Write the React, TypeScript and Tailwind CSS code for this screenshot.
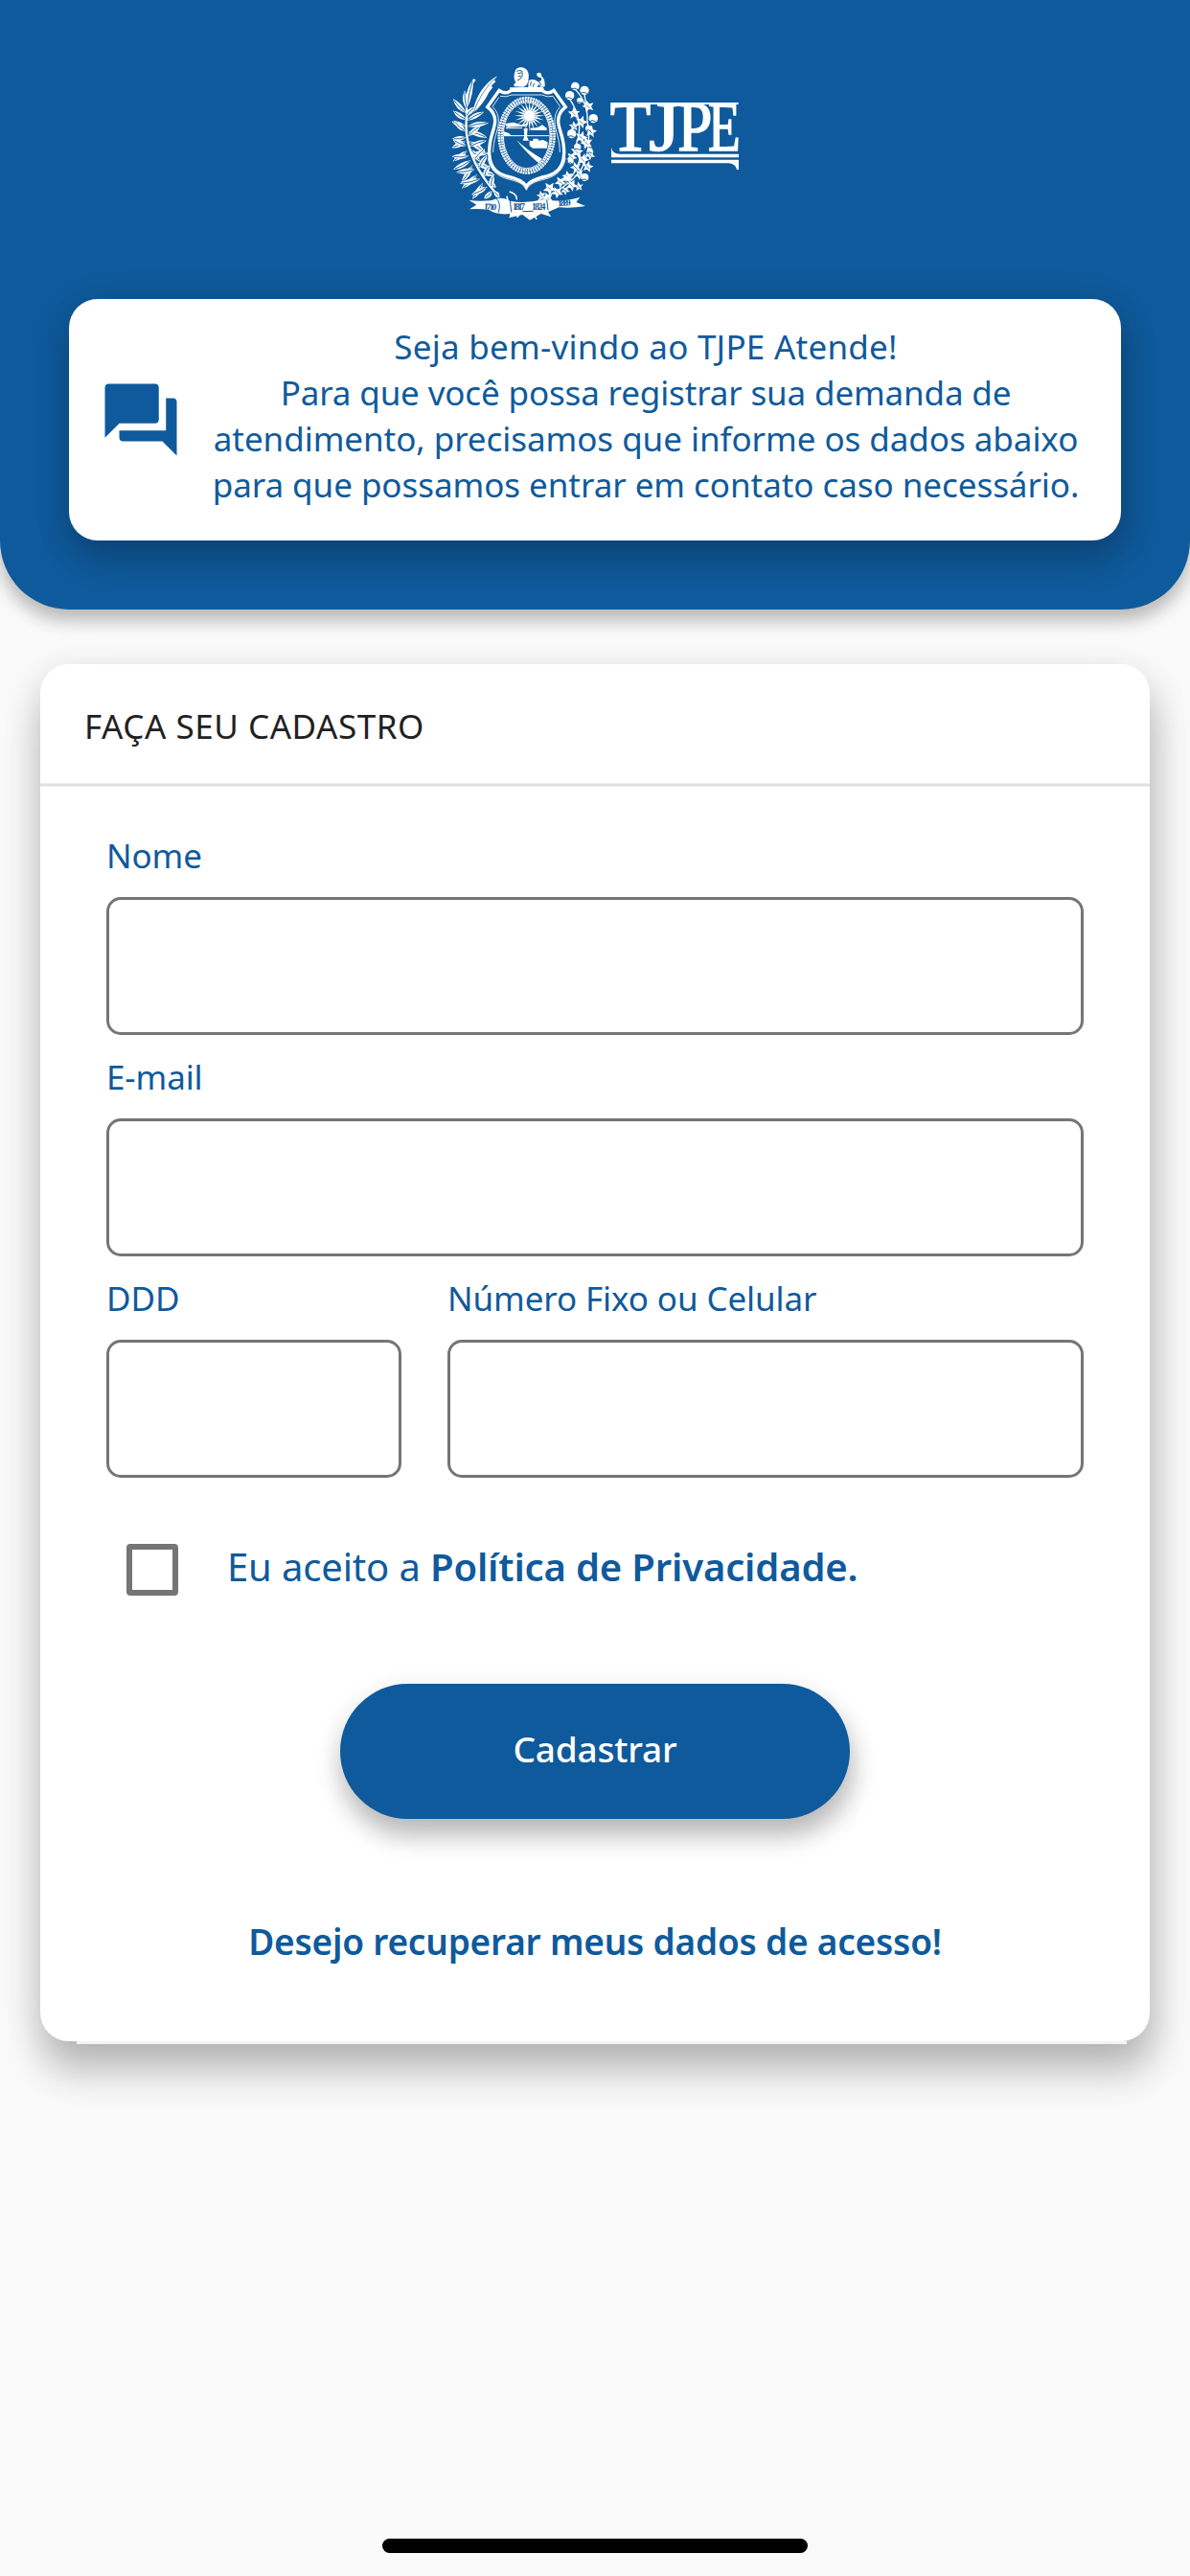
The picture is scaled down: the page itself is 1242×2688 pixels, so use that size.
import React, { useState, type ReactElement } from 'react'
import { MdForum } from 'react-icons/md'

interface FieldProps {
    label: string
    name: string
    className?: string
}

type Leaf = [x: number, y: number, angle: number, length: number]

// x, y, angle and length of every leaf of the sugar cane branch
const CANE_LEAVES: Leaf[] = [
    [112, 190, -80, 95], [112, 192, -100, 60], [110, 205, -135, 62], [108, 215, -50, 42],
    [112, 225, -150, 52], [112, 228, -30, 60], [108, 245, -165, 46], [114, 246, -12, 66],
    [108, 262, -140, 50], [116, 262, 15, 62], [108, 280, 170, 42], [116, 276, -42, 48],
    [106, 292, 150, 46], [118, 292, 32, 62], [110, 306, -160, 46], [122, 308, -22, 54],
    [112, 322, 140, 56], [124, 318, 50, 48], [118, 338, 175, 54], [130, 332, -5, 50],
    [124, 352, 150, 62], [136, 348, -48, 46], [130, 366, 120, 66], [142, 362, 18, 46],
    [136, 380, 168, 58], [150, 376, -62, 48], [144, 396, 135, 66], [158, 392, 5, 42],
    [154, 410, 165, 66], [166, 404, -70, 40], [162, 422, 120, 62], [174, 420, 24, 34],
    [176, 434, 150, 56], [188, 436, -85, 38], [190, 448, 130, 34], [196, 450, 40, 26],
]

// the round bolls and the pointed leaves of the cotton branch
const BOLLS = [
    [451, 120, 13], [480, 133, 14], [434, 149, 14], [508, 221, 14], [440, 269, 14],
    [493, 252, 10], [458, 310, 11], [481, 405, 12], [437, 355, 9], [497, 322, 9],
    [425, 412, 10], [465, 165, 9],
]
const COTTON_LEAVES = [
    [492, 183, 18], [447, 205, 18], [470, 232, 19], [500, 262, 18], [470, 280, 19],
    [447, 245, 15], [487, 298, 19], [456, 325, 19], [498, 335, 15], [440, 342, 16],
    [475, 350, 19], [490, 372, 17], [453, 374, 17], [428, 402, 17], [464, 396, 16],
    [405, 420, 18], [440, 430, 18], [371, 440, 20], [462, 434, 14], [395, 452, 18],
    [365, 470, 17], [345, 462, 14], [420, 446, 14],
]

const star = (cx: number, cy: number, r: number) =>
    Array.from({ length: 10 }, (_, i) => {
        const a = (i * Math.PI) / 5 + cx
        const d = i % 2 ? r * 0.5 : r * 1.1
        return `${(cx + d * Math.cos(a)).toFixed(1)},${(cy + d * Math.sin(a)).toFixed(1)}`
    }).join(' ')

function Logo(): ReactElement {
    return (
        <svg
            className="h-[190px] w-[340px]"
            viewBox="0 0 1020 570"
            fill="#fff"
            aria-label="TJPE"
        >
            {/* sugar cane */}
            <path d="M137 98C115 125 107 155 112 210C102 280 119 360 204 456" fill="none" stroke="#fff" strokeWidth="7" />
            {CANE_LEAVES.map(([x, y, angle, length]) => (
                <g key={`${x}-${y}`} transform={`translate(${x} ${y}) rotate(${angle})`}>
                    <path d={`M0 0Q${length * 0.5} -17 ${length} 3Q${length * 0.5} 14 0 0Z`} />
                    <path d={`M4 0Q${length * 0.5} -3 ${length - 6} 2`} fill="none" stroke="#0f5a9c" strokeWidth="2.5" />
                </g>
            ))}
            <path d="M207 88C178 103 140 142 130 203C150 192 169 162 181 139L193 123L188 119L203 104L197 102Z" />
            <path d="M202 93Q155 137 132 203" fill="none" stroke="#0f5a9c" strokeWidth="2" />

            {/* cotton */}
            <path d="M452 130Q492 175 489 230Q505 320 467 385Q425 440 335 475M434 160Q480 230 455 300Q485 350 430 415M480 145L488 200" fill="none" stroke="#fff" strokeWidth="4" />
            {COTTON_LEAVES.map(([x, y, r]) => (
                <g key={`${x}-${y}`}>
                    <polygon points={star(x, y, r)} />
                    <path d={`M${x - 6} ${y - 5}L${x + 5} ${y + 6}`} stroke="#0f5a9c" strokeWidth="2" />
                </g>
            ))}
            {BOLLS.map(([x, y, r]) => (
                <g key={`${x}-${y}`}>
                    <circle cx={x} cy={y} r={r} />
                    <path d={`M${x - r} ${y + r * 0.7}Q${x} ${y + 2} ${x + r * 0.7} ${y + r * 0.9}`} fill="none" stroke="#0f5a9c" strokeWidth="3" />
                </g>
            ))}

            {/* lion */}
            <path d="M262 76C264 62 276 58 290 62C302 66 307 80 305 94C304 110 300 120 288 122L262 121C256 117 259 112 266 108C259 101 258 87 262 76Z" />
            <path d="M268 74Q273 68 284 72L286 86L278 98L270 101M271 80L282 78M273 89L281 88" fill="none" stroke="#0f5a9c" strokeWidth="3" />
            <path d="M305 103C315 96 327 100 333 105C342 108 349 99 344 93C333 94 328 84 332 79C339 74 348 80 345 88C355 96 357 109 356 121L344 122L337 114L331 123L304 125Z" />
            <path d="M313 105L311 119M323 111L318 122M337 105L345 117" stroke="#0f5a9c" strokeWidth="3" />
            <path d="M246 124L350 122L354 130H246Z" />

            {/* shield */}
            <path
                d="M213 133Q229 145 244 137L251 133H347L354 137Q369 145 384 133L421 185Q397 203 398 231C400 260 418 282 416 330C414 374 394 392 361 402C328 409 307 417 298 434C289 417 270 409 237 402C204 392 184 374 182 330C180 282 198 260 200 231Q201 203 176 185Z"
                fill="#0f5a9c"
                stroke="#fff"
                strokeWidth="10"
            />
            <path
                d="M216 151Q235 156 252 147H346Q365 156 381 151L404 184Q385 203 387 233C389 260 403 288 403 327M212 155L192 184Q213 203 211 233C209 260 194 288 194 327M177 344C184 384 208 402 242 411C272 418 289 425 298 445C307 425 326 418 356 411C390 402 414 384 421 344"
                fill="none"
                stroke="#fff"
                strokeWidth="2.5"
            />
            <ellipse cx="299" cy="274" rx="82" ry="113" fill="none" stroke="#fff" strokeWidth="17" strokeDasharray="6 2" />
            <ellipse cx="299" cy="274" rx="82" ry="113" fill="none" stroke="#0f5a9c" strokeWidth="3" strokeDasharray="4 5" />
            <ellipse cx="299" cy="274" rx="73" ry="103" fill="none" stroke="#fff" strokeWidth="2.5" />

            {/* sun over the harbour */}
            <circle cx="308" cy="212" r="18" />
            {Array.from({ length: 20 }, (_, i) => (
                <path key={i} d="M-3 18L0 48L3 18Z" transform={`translate(308 212) rotate(${i * 18})`} />
            ))}
            <path d="M231 237L258 233L282 241L304 236L299 245L237 248ZM310 251L334 249L348 241L362 251V258L310 257Z" />
            <path d="M228 262L243 267L252 275H228ZM290 253L302 251L300 278L306 290H287L292 276Z" />
            <path d="M228 275H370M234 251H285" stroke="#fff" strokeWidth="3" />
            <path d="M308 290L318 292L320 284H334L337 290L350 288L365 295L363 314L318 314L308 306Z" />
            <path d="M267 288Q300 320 347 347L337 361Q300 331 267 288Z" />
            <path d="M317 308L362 309" stroke="#fff" strokeWidth="6" />

            {/* ribbon */}
            <path d="M118 476Q150 482 190 477Q222 463 247 479Q295 489 350 474Q405 485 466 467L454 483L483 495Q440 503 400 499L366 514L376 529L344 519L309 539L286 522L244 532L248 519Q207 524 181 507Q153 503 120 505L142 491Z" />
            <path d="M245 450Q269 456 268 475M203 474L220 512M237 464L247 515M247 520L286 507L269 530M319 513L330 537M337 509L366 514M358 460L365 483" fill="none" stroke="#fff" strokeWidth="5" />
            <path d="M203 471Q220 484 211 515M247 476L251 514M362 475L366 508M286 512L320 511" fill="none" stroke="#0f5a9c" strokeWidth="3" />
            <g fill="#0f5a9c" fontFamily="Liberation Serif, serif" fontSize="28" fontWeight="700">
                <text x="164" y="505" textLength="40" transform="rotate(5 164 505)">1710</text>
                <text x="255" y="508" textLength="39">1817</text>
                <text x="315" y="506" textLength="43">1824</text>
                <text x="397" y="496" textLength="41" transform="rotate(-5 397 496)">1889</text>
            </g>

            {/* wordmark */}
            <g fontFamily="Liberation Serif, serif" fontSize="224" stroke="#fff" strokeWidth="5">
                <text transform="translate(560 320) scale(.93 1)">T</text>
                <text transform="translate(682 320) scale(1.12 1)">J</text>
                <text transform="translate(772 320) scale(.87 1)">P</text>
                <text transform="translate(867 320) scale(.74 1)">E</text>
            </g>
            <path d="M566 171H962V177H566ZM564 312Q568 332 590 332H963V343H564ZM564 350H963V381H957Q953 362 932 361H564Z" />
        </svg>
    )
}

function Field({ label, name, className = '' }: FieldProps): ReactElement {
    return (
        <label className={`flex flex-col ${className}`}>
            <span className="h-[87px] pt-[20px] text-[35px] leading-[48px] tracking-[-0.1px] whitespace-nowrap text-[#0f5a9c]">
                {label}
            </span>
            <input
                name={name}
                className="h-36 w-full rounded-[15px] border-[3px] border-[#757575] bg-white px-6 text-[35px] outline-none"
            />
        </label>
    )
}

export default function App(): ReactElement {
    const [accepted, setAccepted] = useState(false)

    return (
        <div className="flex h-[2688px] w-[1242px] flex-col items-center overflow-hidden bg-[#fafafa] font-['Noto_Sans','Open_Sans',sans-serif]">
            <header className="flex h-[636px] w-full shrink-0 flex-col items-center rounded-b-[72px] bg-[#0f5a9c] pt-[50px] shadow-[0_12px_18px_rgba(0,0,0,0.2),0_6px_24px_rgba(0,0,0,0.1)]">
                <div className="flex h-[262px] w-full pl-[450px]">
                    <Logo />
                </div>
                <div className="flex h-[252px] w-[1098px] items-center rounded-[30px] bg-white pl-[30px] text-[#0f5a9c] shadow-[3px_20px_36px_rgba(0,0,0,0.2),0_6px_42px_rgba(0,0,0,0.1)]">
                    <MdForum className="size-[90px] shrink-0" />
                    <p className="ml-[7px] w-[950px] pb-[8px] text-center text-[35px] leading-[48px] whitespace-nowrap">
                        <span className="tracking-[0.25px]">Seja bem-vindo ao TJPE Atende!</span>
                        <br />
                        <span className="tracking-[-0.15px]">Para que você possa registrar sua demanda de</span>
                        <br />
                        <span className="tracking-[-0.05px]">atendimento, precisamos que informe os dados abaixo</span>
                        <br />
                        <span className="tracking-[-0.05px]">para que possamos entrar em contato caso necessário.</span>
                    </p>
                </div>
            </header>

            <main className="mt-[57px] flex h-[1437px] w-[1158px] shrink-0 flex-col rounded-[30px] bg-white shadow-[3px_33px_42px_rgba(0,0,0,0.22),0_9px_42px_rgba(0,0,0,0.12)]">
                <h1 className="flex h-[124px] items-center pt-[6px] pl-[46px] text-[35px] tracking-[0.55px] text-[#212121]">
                    FAÇA SEU CADASTRO
                </h1>
                <div className="h-1 shrink-0 border-y border-[#eeeeee] bg-[#e0e0e0]" />
                <form className="flex flex-col px-[69px] pt-[28px]" onSubmit={(e) => e.preventDefault()}>
                    <Field label="Nome" name="nome" />
                    <Field label="E-mail" name="email" />
                    <div className="flex gap-12">
                        <Field label="DDD" name="ddd" className="w-[308px]" />
                        <Field label="Número Fixo ou Celular" name="telefone" className="flex-1" />
                    </div>
                    <label className="mt-[69px] ml-[21px] flex h-[54px] items-center gap-[51px]">
                        <input
                            type="checkbox"
                            checked={accepted}
                            onChange={(e) => setAccepted(e.target.checked)}
                            className="size-[54px] shrink-0 appearance-none rounded-[4px] border-[6px] border-[#757575] checked:bg-[#0f5a9c]"
                        />
                        <span className="pb-[7px] text-[40px] tracking-[-0.15px] whitespace-nowrap text-[#0f5a9c]">
                            Eu aceito a <b className="font-semibold">Política de Privacidade.</b>
                        </span>
                    </label>
                    <button
                        type="submit"
                        className="mt-[92px] h-[141px] w-[532px] self-center rounded-full bg-[#0f5a9c] pb-[6px] text-[37px] font-medium tracking-[-0.2px] text-white shadow-[3px_18px_27px_rgba(0,0,0,0.22),0_9px_30px_rgba(0,0,0,0.1)]"
                    >
                        Cadastrar
                    </button>
                    <a className="mt-[101px] self-center text-[37px] leading-[54px] font-semibold tracking-[-0.2px] whitespace-nowrap text-[#0f5a9c]">
                        Desejo recuperar meus dados de acesso!
                    </a>
                </form>
                {/* bottom edge of the scroll area */}
                <div className="mt-auto -mb-[3px] ml-[38px] h-[3px] w-[1096px] shrink-0 bg-[#f3f3f3]" />
            </main>

            <div className="mt-auto mb-6 h-[15px] w-[444px] shrink-0 rounded-full bg-black" />
        </div>
    )
}
